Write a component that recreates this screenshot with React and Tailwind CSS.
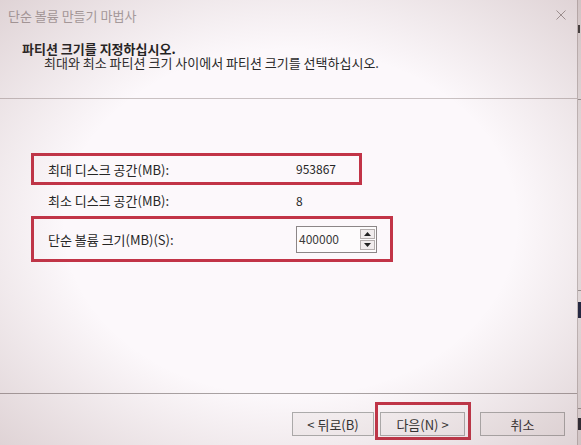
import React from "react";

const font = { fontFamily: '"Noto Sans CJK KR", "Noto Sans", sans-serif' };

const WizardButton = ({ children, className = "" }) => (
  <div
    className={`flex h-[24px] items-center justify-center border border-[#adadad] bg-[#f6f1f3] text-[13px] text-[#303030] ${className}`}
  >
    {children}
  </div>
);

const App = () => {
  return (
    <div
      className="relative flex h-[445px] w-[581px] overflow-hidden bg-[#fcf8fb] text-[13px] leading-none text-[#262626]"
      style={font}
    >
      {/* Dialog */}
      <div className="flex w-[578px] flex-col border-r border-[#c4bcbc]">
        {/* Title bar */}
        <div className="flex h-[30px] items-center justify-between pl-[8px] pr-[10px]">
          <span className="text-[13px] text-[#aaa2a3]">단순 볼륨 만들기 마법사</span>
          <svg width="10" height="10" viewBox="0 0 10 10" className="mr-[1px]">
            <path d="M0.5 0.5 L9.5 9.5 M9.5 0.5 L0.5 9.5" stroke="#a49c9c" strokeWidth="1" fill="none" />
          </svg>
        </div>

        {/* Header */}
        <div className="flex h-[69px] flex-col border-b border-[#c9c1c2] pl-[22px] pt-[12px]">
          <div className="text-[13px] font-bold leading-[14px] text-[#1f1f1f]">파티션 크기를 지정하십시오.</div>
          <div className="pl-[22px] text-[13px] leading-[14px] text-[#2a2a2a]">
            최대와 최소 파티션 크기 사이에서 파티션 크기를 선택하십시오.
          </div>
        </div>

        {/* Content */}
        <div className="flex flex-1 flex-col pl-[31px] pt-[54px]">
          <div className="flex h-[32px] w-[331px] items-center border-[3px] border-[#c23447] pl-[14px]">
            <span className="w-[248px]">최대 디스크 공간(MB):</span>
            <span className="text-[12px]">953867</span>
          </div>
          <div className="flex h-[31px] items-center pl-[17px]">
            <span className="w-[248px]">최소 디스크 공간(MB):</span>
            <span className="text-[12px]">8</span>
          </div>
          <div className="flex h-[46px] w-[362px] items-center border-[3px] border-[#c23447] pl-[14px]">
            <span className="w-[248px]">단순 볼륨 크기(MB)(S):</span>
            <div className="flex h-[27px] w-[81px] items-center border border-[#8c8687] bg-[#fdfbfc] pl-[2px] pr-[1px]">
              <span className="flex-1 text-[12px] text-[#3a3a3a]">400000</span>
              <div className="flex flex-col gap-[1px]">
                <div className="flex h-[10px] w-[15px] items-center justify-center border border-[#b4aeae] bg-[#f1eced]">
                  <svg width="7" height="4" viewBox="0 0 7 4">
                    <path d="M0 4 L3.5 0 L7 4 Z" fill="#222" />
                  </svg>
                </div>
                <div className="flex h-[10px] w-[15px] items-center justify-center border border-[#b4aeae] bg-[#f1eced]">
                  <svg width="7" height="4" viewBox="0 0 7 4">
                    <path d="M0 0 L3.5 4 L7 0 Z" fill="#222" />
                  </svg>
                </div>
              </div>
            </div>
          </div>
        </div>

        {/* Footer */}
        <div className="flex h-[52px] items-start border-t border-[#a9a2a3] pl-[292px]">
          <WizardButton className="mt-[18px] w-[82px]">&lt; 뒤로(B)</WizardButton>
          <div className="ml-[1px] mt-[8px] h-[38px] w-[96px] border-[3px] border-[#c23447] pl-[2px] pt-[7px]">
            <WizardButton className="w-[85px]">다음(N) &gt;</WizardButton>
          </div>
          <WizardButton className="ml-[9px] mt-[18px] w-[85px]">취소</WizardButton>
        </div>
      </div>

      {/* Edge of the window behind */}
      <div className="flex w-[3px] flex-col bg-[#eae4e5]">
        <div className="mt-[25px] h-[8px] w-[2px] bg-[#3a3a3a]" />
        <div className="mt-[66px] h-[1px] w-[3px] bg-[#9a9494]" />
        <div className="mt-[190px] h-[1px] w-[3px] bg-[#9a9494]" />
        <div className="mt-[11px] h-[16px] w-[3px] bg-[#1c2440]" />
        <div className="mt-[90px] h-[1px] w-[3px] bg-[#9a9494]" />
        <div className="mt-[9px] h-[12px] w-[3px] bg-[#20242e]" />
      </div>

      {/* Vignette of the photo */}
      <div className="pointer-events-none absolute inset-0 bg-[radial-gradient(ellipse_at_center,rgba(255,255,255,0)_55%,rgba(120,80,80,0.22)_100%)]" />
    </div>
  );
};

export default App;
